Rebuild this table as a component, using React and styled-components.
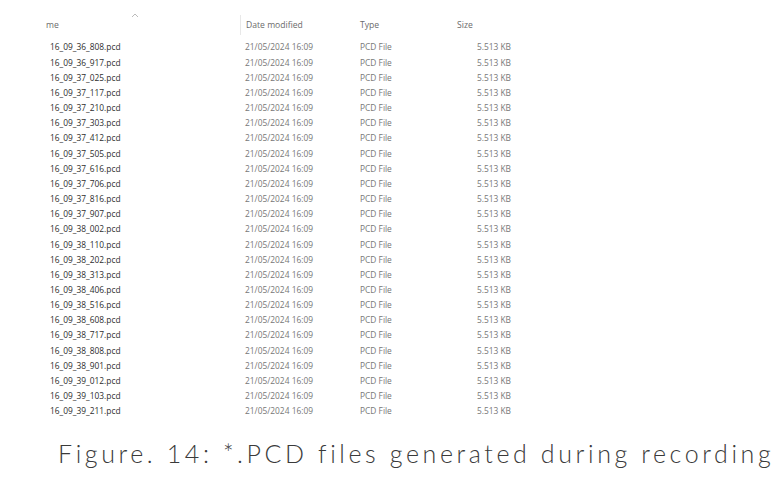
import React from 'react';
import styled, { createGlobalStyle } from 'styled-components';

const GlobalStyle = createGlobalStyle`
  html, body {
    margin: 0;
    padding: 0;
    background: #fff;
  }
  body {
    width: 780px;
    height: 482px;
    overflow: hidden;
  }
`;

const Page = styled.div`
  width: 780px;
  height: 482px;
  display: flex;
  flex-direction: column;
  font-family: 'Open Sans', 'Noto Sans', sans-serif;
`;

const Explorer = styled.div`
  padding-top: 15px;
  display: flex;
  flex-direction: column;
`;

const Grid = styled.div`
  display: grid;
  grid-template-columns: 240px 115px 96px 60px;
  align-items: center;
`;

const HeaderRow = styled(Grid)`
  height: 20px;
  margin-bottom: 4.4px;
`;

const HeaderCell = styled.div`
  position: relative;
  height: 100%;
  display: flex;
  align-items: center;
  font-size: 8.6px;
  color: #6b6b6b;
  padding-left: ${p => p.$pad || 5}px;
  border-left: ${p => (p.$divider ? '1px solid #e8e8e8' : 'none')};
`;

const SortArrow = styled.svg`
  position: absolute;
  left: 131px;
  top: -2px;
`;

const Row = styled(Grid)`
  height: 15.17px;
`;

const Cell = styled.div`
  font-size: 8.4px;
  line-height: 15px;
  white-space: nowrap;
  color: ${p => (p.$dark ? '#2e2e2e' : '#777')};
  padding-left: ${p => p.$pad || 5}px;
  text-align: ${p => (p.$right ? 'right' : 'left')};
  padding-right: 0;
`;

const Caption = styled.div`
  margin-top: auto;
  margin-bottom: 14px;
  padding-left: 58px;
  font-family: 'Lato', 'Liberation Sans', sans-serif;
  font-weight: 300;
  font-size: 25px;
  letter-spacing: 3.6px;
  color: #3a3a3a;
  white-space: nowrap;
`;

const files = [
  '16_09_36_808', '16_09_36_917', '16_09_37_025', '16_09_37_117', '16_09_37_210',
  '16_09_37_303', '16_09_37_412', '16_09_37_505', '16_09_37_616', '16_09_37_706',
  '16_09_37_816', '16_09_37_907', '16_09_38_002', '16_09_38_110', '16_09_38_202',
  '16_09_38_313', '16_09_38_406', '16_09_38_516', '16_09_38_608', '16_09_38_717',
  '16_09_38_808', '16_09_38_901', '16_09_39_012', '16_09_39_103', '16_09_39_211',
];

export default function App() {
  return (
    <Page>
      <GlobalStyle />
      <Explorer>
        <HeaderRow>
          <HeaderCell $pad={46}>
            <SortArrow width="8" height="5" viewBox="0 0 8 5">
              <path d="M1 4 L4 1 L7 4" fill="none" stroke="#aaa" strokeWidth="0.8" />
            </SortArrow>
            me
          </HeaderCell>
          <HeaderCell $divider>Date modified</HeaderCell>
          <HeaderCell>Type</HeaderCell>
          <HeaderCell $pad={6}>Size</HeaderCell>
        </HeaderRow>
        {files.map(f => (
          <Row key={f}>
            <Cell $dark $pad={50}>{f}.pcd</Cell>
            <Cell>21/05/2024 16:09</Cell>
            <Cell>PCD File</Cell>
            <Cell $right>5.513 KB</Cell>
          </Row>
        ))}
      </Explorer>
      <Caption>Figure. 14: *.PCD files generated during recording</Caption>
    </Page>
  );
}
